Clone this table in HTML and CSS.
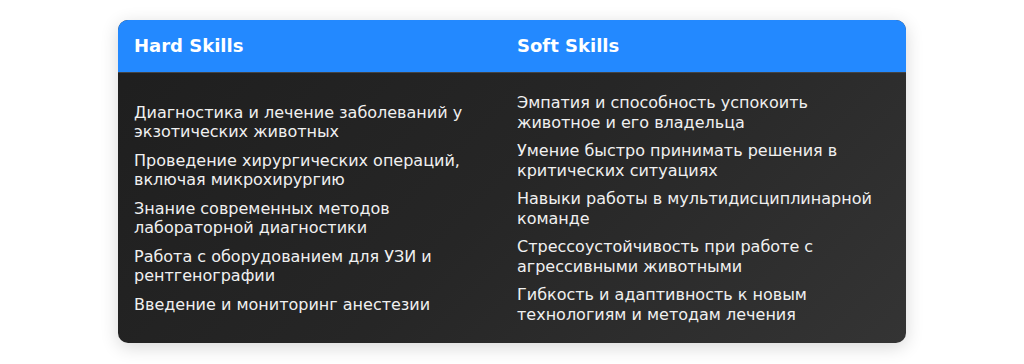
FILE: index.html
```html
<!DOCTYPE html>
<html lang="ru">
<head>
<meta charset="utf-8">
<title>Skills</title>
<link rel="stylesheet" href="styles.css">
</head>
<body>
<div class="card">
  <div class="row head">
    <div class="cell">Hard Skills</div>
    <div class="cell">Soft Skills</div>
  </div>
  <div class="row body">
    <ul class="cell list">
      <li>Диагностика и лечение заболеваний у экзотических животных</li>
      <li>Проведение хирургических операций, включая микрохирургию</li>
      <li>Знание современных методов лабораторной диагностики</li>
      <li>Работа с оборудованием для УЗИ и рентгенографии</li>
      <li>Введение и мониторинг анестезии</li>
    </ul>
    <ul class="cell list">
      <li>Эмпатия и способность успокоить животное и его владельца</li>
      <li>Умение быстро принимать решения в критических ситуациях</li>
      <li>Навыки работы в мультидисциплинарной команде</li>
      <li>Стрессоустойчивость при работе с агрессивными животными</li>
      <li>Гибкость и адаптивность к новым технологиям и методам лечения</li>
    </ul>
  </div>
</div>
</body>
</html>
```

FILE: styles.css
```css
* { box-sizing: border-box; }
html, body { margin: 0; padding: 0; background: #fff; }
body {
  font-family: "DejaVu Sans", sans-serif;
  padding: 20px 118px;
}
.card {
  width: 788px;
  border-radius: 10px;
  overflow: hidden;
  box-shadow: 0 4px 18px rgba(0, 0, 0, 0.16);
  background: linear-gradient(135deg, #1e1e1e 0%, #262626 50%, #343434 100%);
}
.row {
  display: grid;
  grid-template-columns: 383px 1fr;
}
.head {
  background: #2389ff;
  border-bottom: 1px solid #444;
  height: 53px;
  align-items: center;
}
.head .cell {
  padding: 0 16px;
  color: #fff;
  font-weight: bold;
  font-size: 18px;
  line-height: 20px;
}
.body {
  align-items: center;
  padding: 20px 0 19px;
  min-height: 270px;
}
.list {
  list-style: none;
  margin: 0;
  padding: 0 16px;
  color: #f0f0f0;
  font-size: 16px;
  line-height: 19.2px;
}
.list li + li { margin-top: 9.6px; }
```
